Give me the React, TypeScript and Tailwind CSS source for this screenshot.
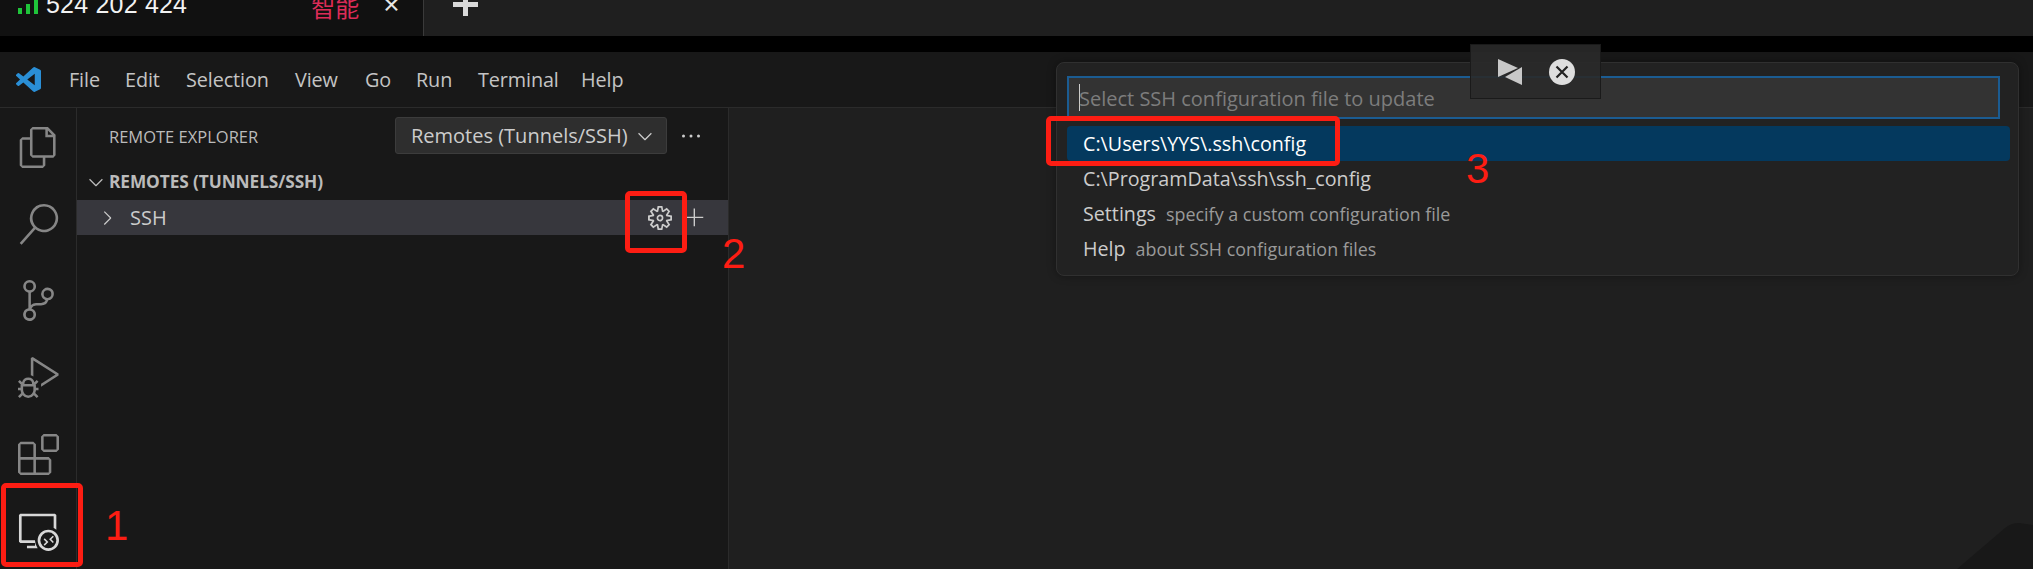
import React from "react";
import {
  VscFiles,
  VscSearch,
  VscSourceControl,
  VscDebugAlt,
  VscExtensions,
  VscRemoteExplorer,
  VscChevronDown,
  VscChevronRight,
  VscEllipsis,
  VscSettingsGear,
  VscAdd,
} from "react-icons/vsc";

const menu: [string, string][] = [
  ["File", "w-[56px]"],
  ["Edit", "w-[61px]"],
  ["Selection", "w-[109px]"],
  ["View", "w-[70px]"],
  ["Go", "w-[51px]"],
  ["Run", "w-[62px]"],
  ["Terminal", "w-[103px]"],
  ["Help", "w-[50px]"],
];

function Annotation({ className }: { className: string }) {
  return <div className={"absolute border-[5px] border-[#fd1d13] rounded-[5px] " + className} />;
}

export default function App() {
  return (
    <div className="relative w-[2033px] h-[569px] overflow-hidden bg-black flex flex-col font-['Open_Sans',sans-serif] text-[#cccccc]">
      {/* browser strip */}
      <div className="h-9 flex shrink-0">
        <div className="w-[424px] bg-[#111111] border-r border-[#3a3a3a] flex items-start overflow-hidden">
          <div className="ml-[18px] flex items-end gap-[4px] h-[14px]">
            <span className="w-[4px] h-[6px] bg-[#1fc43a]" />
            <span className="w-[4px] h-[10px] bg-[#1fc43a]" />
            <span className="w-[4px] h-[14px] bg-[#1fc43a]" />
          </div>
          <span className="ml-[8px] -mt-[11px] text-[25px] leading-[30px] text-[#f2f2f2] font-['Liberation_Sans',sans-serif] tracking-[0.2px]">524 202 424</span>
          <span className="ml-[124px] -mt-[8px] text-[24px] leading-[30px] text-[#dd2c58] font-['Noto_Sans_CJK_SC',sans-serif]">智能</span>
          <span className="ml-[24px] -mt-[10px] text-[28px] leading-[30px] text-[#e6e6e6] font-['Liberation_Sans',sans-serif]">×</span>
        </div>
        <div className="flex-1 bg-[#1f1f1f] flex items-start pl-[29px]">
          <div className="relative w-[25px] h-[16px]">
            <span className="absolute left-[10px] top-0 w-[5px] h-[16px] bg-[#d9d9d9]" />
            <span className="absolute left-0 top-[2px] w-[25px] h-[5px] bg-[#d9d9d9]" />
          </div>
        </div>
      </div>
      <div className="h-4 bg-black shrink-0" />
      {/* title bar */}
      <div className="h-[56px] shrink-0 bg-[#181818] border-b border-[#2b2b2b] flex items-center">
        <svg viewBox="0 0 24 24" className="ml-[16px] w-[25px] h-[25px]" fill="#2a8fd6">
          <path d="M23.15 2.587L18.21.21a1.494 1.494 0 0 0-1.705.29l-9.46 8.63-4.12-3.128a.999.999 0 0 0-1.276.057L.327 7.261A1 1 0 0 0 .326 8.74L3.899 12 .326 15.26a1 1 0 0 0 .001 1.479L1.65 17.94a.999.999 0 0 0 1.276.057l4.12-3.128 9.46 8.63a1.492 1.492 0 0 0 1.704.29l4.942-2.377A1.5 1.5 0 0 0 24 20.06V3.939a1.5 1.5 0 0 0-.85-1.352zm-5.146 14.861L10.826 12l7.178-5.448v10.896z" />
        </svg>
        <div className="ml-[28px] flex text-[19.8px] leading-6 tracking-[-0.1px] text-[#c4c4c4]">
          {menu.map(([m, w]) => (
            <span key={m} className={w}>{m}</span>
          ))}
        </div>
      </div>
      {/* body */}
      <div className="flex-1 flex min-h-0">
        <div className="w-[77px] shrink-0 bg-[#181818] border-r border-[#2b2b2b] flex flex-col items-center text-[#868686] pt-px pl-px">
          <div className="h-[77px] flex items-center justify-center"><VscFiles size={41} /></div>
          <div className="h-[77px] flex items-center justify-center"><VscSearch size={41} /></div>
          <div className="h-[77px] flex items-center justify-center"><VscSourceControl size={41} /></div>
          <div className="h-[77px] flex items-center justify-center"><VscDebugAlt size={41} /></div>
          <div className="h-[77px] flex items-center justify-center"><VscExtensions size={41} /></div>
          <div className="h-[77px] flex items-center justify-center text-[#d7d7d7]"><VscRemoteExplorer size={41} /></div>
        </div>
        <div className="w-[652px] shrink-0 bg-[#181818] border-r border-[#2b2b2b] flex flex-col">
          <div className="h-[55px] flex items-center">
            <span className="ml-[32px] mt-[3px] text-[16.5px] text-[#bbbbbb] whitespace-nowrap">REMOTE EXPLORER</span>
            <div className="ml-auto w-[272px] h-[37px] bg-[#2e2e2e] border border-[#3c3c3c] rounded-[3px] flex items-center pl-[15px] text-[20px] text-[#cccccc] whitespace-nowrap">
              Remotes (Tunnels/SSH)
              <VscChevronDown size={22} className="ml-[6px] shrink-0" />
            </div>
            <VscEllipsis size={24} className="ml-[12px] mr-[25px] text-[#cccccc]" />
          </div>
          <div className="h-[34px] mb-[3px] flex items-center pt-[4px] pl-[8px] font-bold text-[17.3px] tracking-[-0.1px] text-[#bbbbbb] whitespace-nowrap">
            <VscChevronDown size={22} className="mr-[2px]" />
            REMOTES (TUNNELS/SSH)
          </div>
          <div className="h-[35px] bg-[#37373d] flex items-center pl-[19px] text-[20px] text-[#cccccc]">
            <VscChevronRight size={22} />
            <span className="ml-[12px]">SSH</span>
            <VscSettingsGear size={24} className="ml-auto" />
            <VscAdd size={22} className="ml-[12px] mr-[22px]" />
          </div>
        </div>
        <div className="flex-1 bg-[#1f1f1f]" />
      </div>

      {/* faint corner shape */}
      <svg className="absolute right-0 bottom-0 w-[76px] h-[46px]" viewBox="0 0 76 46" fill="#181818">
        <path d="M0 46 L48 5 Q54 0 62 0 L76 2 V46 Z" />
      </svg>

      {/* quick input */}
      <div className="absolute left-[1056px] top-[62px] w-[963px] h-[214px] bg-[#222222] border border-[#303030] rounded-[8px] shadow-[0_0_8px_rgba(0,0,0,0.36)] pt-[13px] px-[10px] flex flex-col">
        <div className="w-[933px] h-[43px] bg-[#333333] border-2 border-[#1b5c92] flex items-center pl-[10px] text-[20px] text-[#7d7d7d] whitespace-nowrap">
          <span className="w-px h-[27px] bg-[#cccccc]" />
          <span className="-ml-px mt-[2px]">Select SSH configuration file to update</span>
        </div>
        <div className="mt-[7px] w-[943px] text-[19.7px] leading-[36px] text-[#cccccc]">
          <div className="h-[35px] bg-[#04395e] rounded-[4px] pl-[16px] text-white">C:\Users\YYS\.ssh\config</div>
          <div className="h-[35px] pl-[16px]">C:\ProgramData\ssh\ssh_config</div>
          <div className="h-[35px] pl-[16px] flex items-baseline">Settings<span className="ml-[10px] text-[17.9px] text-[#9a9a9a]">specify a custom configuration file</span></div>
          <div className="h-[35px] pl-[16px] flex items-baseline">Help<span className="ml-[10px] text-[17.9px] text-[#9a9a9a]">about SSH configuration files</span></div>
        </div>
      </div>

      {/* debug toolbar */}
      <div className="absolute left-[1470px] top-[44px] w-[131px] h-[55px] bg-[#2a2a2a]/90 border border-[#1a1a1a] flex items-center">
        <svg viewBox="0 0 24 26" className="ml-[27px] w-[24px] h-[26px]" fill="#c8c8c8">
          <polygon points="0,0 0,18 20,9" />
          <polygon points="24,8 24,26 7,18" />
        </svg>
        <svg viewBox="0 0 26 26" className="ml-[27px] w-[26px] h-[26px]">
          <circle cx="13" cy="13" r="13" fill="#dedede" />
          <path d="M7.5 7.5 L18.5 18.5 M18.5 7.5 L7.5 18.5" stroke="#222222" strokeWidth="2.2" />
        </svg>
      </div>

      {/* annotations */}
      <Annotation className="left-[1px] top-[483px] w-[82px] h-[84px]" />
      <Annotation className="left-[625px] top-[191px] w-[62px] h-[62px]" />
      <Annotation className="left-[1046px] top-[116px] w-[294px] h-[50px]" />
      <span className="absolute left-[105px] top-[502px] text-[42px] leading-[48px] text-[#fd1d13] font-['Liberation_Sans',sans-serif]">1</span>
      <span className="absolute left-[722px] top-[230px] text-[42px] leading-[48px] text-[#fd1d13] font-['Liberation_Sans',sans-serif]">2</span>
      <span className="absolute left-[1466px] top-[145px] text-[42px] leading-[48px] text-[#fd1d13] font-['Liberation_Sans',sans-serif]">3</span>
    </div>
  );
}
